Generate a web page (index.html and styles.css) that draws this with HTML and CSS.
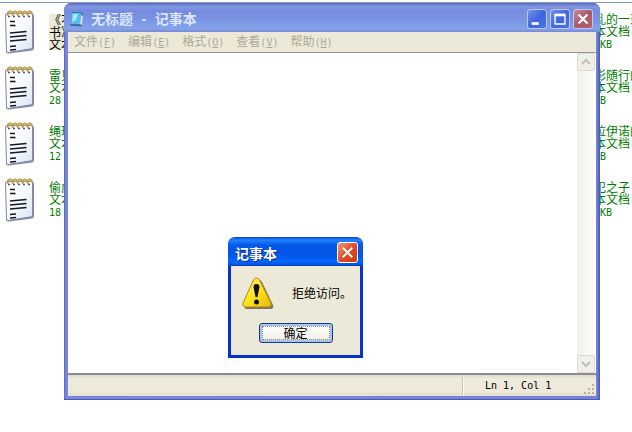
FILE: index.html
```
<!DOCTYPE html>
<html lang="zh-CN">
<head>
  <meta charset="UTF-8">
  <title>记事本</title>
  <link rel="stylesheet" href="styles.css">
</head>
<body>

<!-- notepad file icon, shared by the list -->
<svg width="0" height="0" class="defs">
  <defs>
    <linearGradient id="paper" x1="0" y1="0" x2="1" y2="1">
      <stop offset="0" stop-color="#ffffff"/>
      <stop offset="0.5" stop-color="#f8fbfe"/>
      <stop offset="1" stop-color="#d6e2f2"/>
    </linearGradient>
    <linearGradient id="warn" x1="0" y1="0" x2="1" y2="1">
      <stop offset="0" stop-color="#fff27a"/>
      <stop offset="0.5" stop-color="#ffe51c"/>
      <stop offset="1" stop-color="#e8b800"/>
    </linearGradient>
    <symbol id="txt" viewBox="0 0 32 44">
      <path d="M3 4h26q1 0 1 2v32q0 2-2 2.500L5 43.500Q2 44 2 41z" fill="#85869c"/>
      <path d="M3 3.500h24.500q1 0 1 1.500v32.500q0 1-1 1.200L4 42.500q-1.500 0-1.500-1.500L1.500 5q0-1.500 1.500-1.500z" fill="url(#paper)" stroke="#8488bc"/>
      <path d="M6 11.500h5M6 15.500h5.500M6 23l16.500-1.500M6 27l16.500-1.500M6 31l16.500-1.500M6 36.500l6-.5M6 40l6-.5" stroke="#15181e" stroke-width="1.400" fill="none"/>
      <path d="M4 6q-1-4 1.500-4.500T8 4.500M9 6q-1-4 1.500-4.500T13 4.500M14 6q-1-4 1.500-4.500T18 4.500M19 6q-1-4 1.500-4.500T23 4.500M24 6q-1-4 1.500-4.500T28 4.500" stroke="#c0a040" stroke-width="1.800" fill="none"/>
      <path d="M4 6.500h2M9 6.500h2M14 6.500h2M19 6.500h2M24 6.500h2" stroke="#5c5078" stroke-width="1.500"/>
    </symbol>
  </defs>
</svg>

<main class="desktop">

  <div class="files">
    <div class="column">
      <div class="tile"><svg class="file-icon"><use href="#txt"/></svg><p class="selected">《不<br>书》<br>文本</p></div>
      <div class="tile"><svg class="file-icon"><use href="#txt"/></svg><p>雷贝<br>文本<br><span class="en">28</span></p></div>
      <div class="tile"><svg class="file-icon"><use href="#txt"/></svg><p>绳环<br>文本<br><span class="en">12</span></p></div>
      <div class="tile"><svg class="file-icon"><use href="#txt"/></svg><p>偷虎<br>文本<br><span class="en">18</span></p></div>
    </div>
    <div class="column right">
      <div class="tile"><p>乱的一束<br>本文档<br><span class="en"> KB</span></p></div>
      <div class="tile"><p>影随行的<br>本文档<br><span class="en">KB</span></p></div>
      <div class="tile"><p>拉伊诺的<br>本文档<br><span class="en">KB</span></p></div>
      <div class="tile"><p>犯之子<br>本文档<br><span class="en"> KB</span></p></div>
    </div>
  </div>

  <!-- Notepad -->
  <section class="notepad">
    <header class="titlebar">
      <svg class="app-icon" viewBox="0 0 16 16">
        <path d="M3 1h9l2 2-1 12-11-1z" fill="#3c73ae"/>
        <path d="M3 2h9l-1 11H2z" fill="#55c0ea"/>
        <path d="M4 3h5L7 9l-4 2z" fill="#a4e8fa"/>
        <path d="M12 4l2 1-1 9-2-1z" fill="#d4e2f4"/>
        <path d="M1 14l11 1" stroke="#35639a"/>
      </svg>
      <h1>无标题<span> - </span>记事本</h1>
      <div class="buttons">
        <button aria-label="最小化"><svg viewBox="0 0 20 20"><path d="M4 15h8" stroke="#fff" stroke-width="3"/></svg></button>
        <button aria-label="最大化"><svg viewBox="0 0 20 20"><path d="M4.500 5.500h11v10h-11z" fill="none" stroke="#fff" stroke-width="1.500"/><path d="M4 5.500h12" stroke="#fff" stroke-width="3"/></svg></button>
        <button class="close" aria-label="关闭"><svg viewBox="0 0 20 20"><path d="M5 5l10 10M15 5L5 15" stroke="#fff" stroke-width="2.500"/></svg></button>
      </div>
    </header>
    <nav class="menu">
      <button>文件<span class="en">(<u>F</u>)</span></button>
      <button>编辑<span class="en">(<u>E</u>)</span></button>
      <button>格式<span class="en">(<u>O</u>)</span></button>
      <button>查看<span class="en">(<u>V</u>)</span></button>
      <button>帮助<span class="en">(<u>H</u>)</span></button>
    </nav>
    <div class="editor">
      <textarea aria-label="文本" spellcheck="false"></textarea>
      <div class="scrollbar">
        <button aria-label="向上滚动"><svg viewBox="0 0 16 16"><path d="M4 10l4-4 4 4" fill="none" stroke="#c0c0b8" stroke-width="2"/></svg></button>
        <button aria-label="向下滚动"><svg viewBox="0 0 16 16"><path d="M4 6l4 4 4-4" fill="none" stroke="#c0c0b8" stroke-width="2"/></svg></button>
      </div>
    </div>
    <footer class="status">
      <span class="position en">Ln 1, Col 1</span>
      <svg class="grip" viewBox="0 0 12 12"><path d="M8 1h2v2H8zM4 5h2v2H4zM8 5h2v2H8zM0 9h2v2H0zM4 9h2v2H4zM8 9h2v2H8z" fill="#b8b4a2"/></svg>
    </footer>
  </section>

  <!-- message box -->
  <section class="dialog" role="alertdialog" aria-labelledby="dlg-title">
    <header>
      <h2 id="dlg-title">记事本</h2>
      <button class="dialog-close" aria-label="关闭"><svg viewBox="0 0 20 20"><path d="M5 5l10 10M15 5L5 15" stroke="#fff" stroke-width="2"/></svg></button>
    </header>
    <div class="message">
      <svg viewBox="0 0 32 32">
        <path d="M17 3q2 0 3 2l11 23q1 4-3 4H5q-3 0-2-2z" fill="#77746a"/>
        <path d="M14.500 1q2 0 3 2l11.500 23q1 3.500-2 4H3q-3-.5-2-4L11.500 3q1-2 3-2z" fill="url(#warn)" stroke="#a98b16"/>
        <path d="M14.500 7q3 0 3 3l-2 10h-2l-2-10q0-3 3-3z" fill="#111"/>
        <circle cx="14.500" cy="25" r="2.500" fill="#111"/>
      </svg>
      <p>拒绝访问。</p>
    </div>
    <button class="ok">确定</button>
  </section>

</main>

</body>
</html>
```
FILE: styles.css
```
* {
  box-sizing: border-box;
}

body {
  margin: 0;
  background: #fff;
  font-family: "Noto Sans CJK SC", sans-serif;
  font-size: 12px;
  line-height: 12px;
  overflow: hidden;
}

h1, h2, p {
  margin: 0;
}

button {
  padding: 0;
  border: 0;
  font: inherit;
  color: inherit;
  background: none;
}

svg {
  display: block;
}

.defs {
  position: absolute;
}

.en {
  font-family: "DejaVu Sans Mono", monospace;
  font-size: 10px;
}

.desktop {
  position: relative;
  height: 100vh;
  padding-top: 2px;
}

/* file list */
.files {
  display: flex;
  justify-content: space-between;
  border-top: 1px solid #7f9bc8;
  padding: 7px 0 0 4px;
}

.column {
  display: flex;
  flex-direction: column;
  gap: 12px;
}

.column.right {
  width: 38px;
  overflow: hidden;
}

.tile {
  display: flex;
  align-items: center;
  gap: 13px;
  height: 44px;
  color: #008000;
  white-space: pre;
}

.file-icon {
  width: 32px;
  height: 44px;
}

.tile .selected {
  color: #000;
  background: #ece9d8;
}

/* notepad window */
.notepad {
  position: absolute;
  top: 3px;
  right: 32px;
  bottom: 32px;
  left: 64px;
  display: flex;
  flex-direction: column;
  padding: 0 4px 4px;
  border-radius: 7px 7px 0 0;
  background: linear-gradient(90deg, #5a68bd 0, #7b87dc 2px, #7582d8 calc(100% - 3px), #4855b4 100%);
  box-shadow: inset 0 -1px #4c58b4;
}

.titlebar {
  display: flex;
  align-items: center;
  gap: 6px;
  height: 29px;
  margin: 0 -4px;
  padding: 2px 7px 0 5px;
  border-radius: 7px 7px 0 0;
  background: linear-gradient(#5363b8 0, #7585d6 2px, #8296e0 4px, #758be0 8px, #7b95e4 18px, #84a4ea 26px, #7688d2 29px);
}

.app-icon {
  width: 16px;
  height: 16px;
}

.titlebar h1 {
  flex: 1;
  font-size: 14px;
  line-height: 16px;
  color: #dbe6fb;
  white-space: pre;
}

.titlebar h1 span {
  font-family: "DejaVu Sans Mono", monospace;
  font-size: 12px;
}

.buttons {
  display: flex;
  gap: 3px;
}

.buttons button {
  width: 20px;
  height: 20px;
  border: 1px solid #b9c8f4;
  border-radius: 3px;
  background: linear-gradient(135deg, #7591ec, #3f66dd 50%, #4674e6);
}

.buttons .close {
  background: linear-gradient(135deg, #cb8b9b, #ae5668 50%, #b5606b);
}

.menu {
  display: flex;
  gap: 12px;
  height: 20px;
  padding: 0 6px;
  color: #aca899;
  background: #ece9d8;
}

.editor {
  flex: 1;
  display: flex;
  min-height: 0;
  border-top: 1px solid #8795a8;
  border-bottom: 2px solid #858e91;
  background: #fff;
}

.editor textarea {
  flex: 1;
  border: 0;
  padding: 2px;
  resize: none;
  outline: 0;
}

.scrollbar {
  display: flex;
  flex-direction: column;
  justify-content: space-between;
  width: 18px;
  margin-right: 1px;
  background: linear-gradient(90deg, #f1f0e9, #fdfdf9);
}

.scrollbar button {
  height: 18px;
  border: 1px solid #dddbd0;
  border-radius: 2px;
  background: #f1f0e8;
}

.status {
  display: flex;
  align-items: stretch;
  justify-content: flex-end;
  height: 21px;
  padding: 2px 0 1px;
  background: linear-gradient(#dedbc9, #efecde 4px, #ece9d8 17px, #e2dfcd);
}

.position {
  width: 122px;
  padding-left: 22px;
  border-left: 1px solid #c5c2b2;
  line-height: 18px;
  white-space: pre;
  box-shadow: inset 1px 0 #fff;
}

.grip {
  align-self: flex-end;
  width: 12px;
  height: 12px;
}

/* message box */
.dialog {
  position: absolute;
  top: 237px;
  left: 228px;
  width: 135px;
  padding: 0 3px 12px;
  border-bottom: 3px solid #0831c9;
  border-radius: 7px 7px 0 0;
  background: linear-gradient(90deg, #0831d9 3px, #ece9d8 3px, #ece9d8 calc(100% - 3px), #0831d9 calc(100% - 3px));
}

.dialog header {
  display: flex;
  align-items: center;
  justify-content: space-between;
  height: 29px;
  margin: 0 -3px;
  padding: 2px 5px 0 7px;
  border-radius: 7px 7px 0 0;
  background: linear-gradient(#0640c0 0, #1670f5 2px, #2383ff 3px, #0459e8 8px, #0254e5 16px, #0567fa 25px, #0243cc 29px);
}

.dialog h2 {
  font-size: 14px;
  line-height: 16px;
  color: #fff;
  text-shadow: 1px 1px #0f2a83;
}

.dialog-close {
  width: 21px;
  height: 21px;
  border: 1px solid #fff;
  border-radius: 3px;
  background: linear-gradient(135deg, #ee9a7f, #df4d27 50%, #cc3c12);
}

.message {
  display: flex;
  align-items: center;
  gap: 18px;
  padding: 11px 0 14px 11px;
}

.message svg {
  width: 32px;
  height: 32px;
}

.message p {
  white-space: nowrap;
}

.ok {
  display: block;
  width: 74px;
  height: 20px;
  margin: 0 auto;
  border: 1px solid #123f7c;
  border-radius: 3px;
  background: linear-gradient(#fff, #f2f1ea 80%, #dcd8cc);
  box-shadow: inset 0 0 0 2px #a9c3f2;
  outline: 1px dotted #8a8a90;
  outline-offset: -4px;
}
```
